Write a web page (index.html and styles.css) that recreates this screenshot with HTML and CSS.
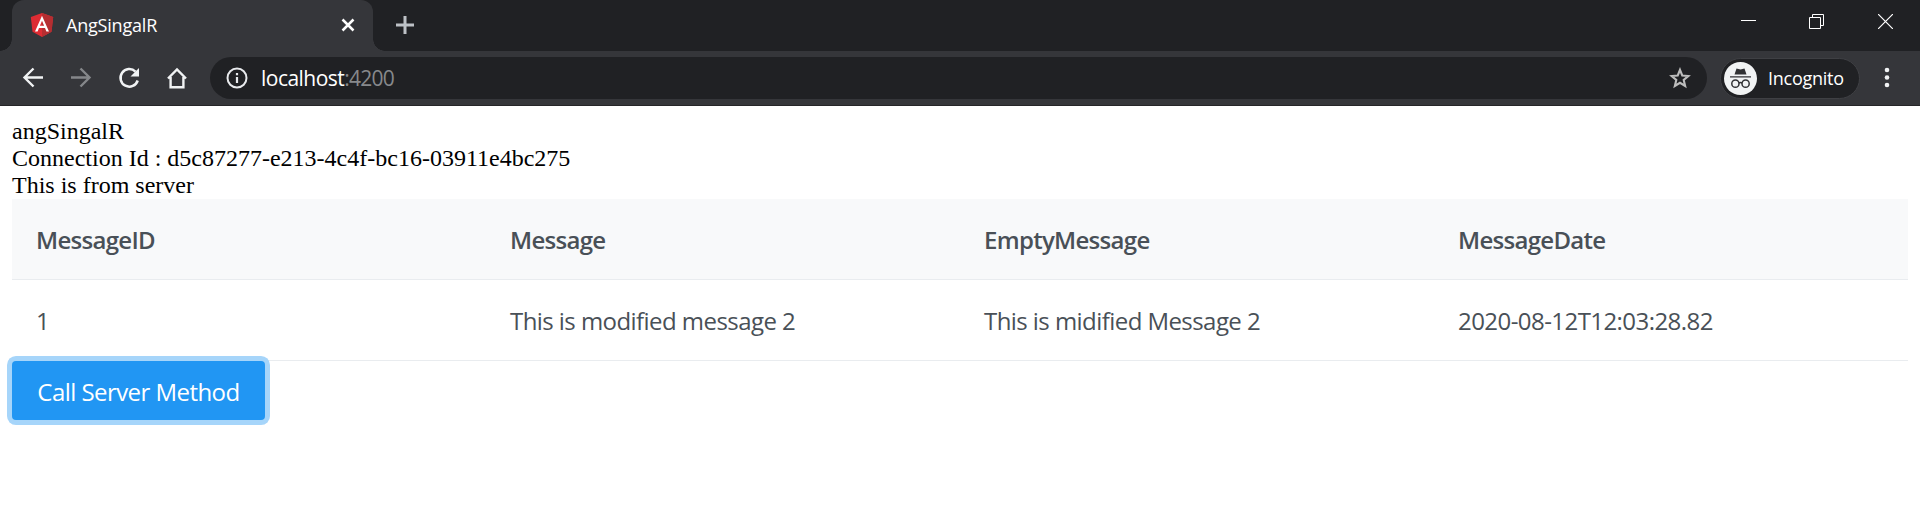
FILE: index.html
```html
<!DOCTYPE html>
<html lang="en">
<head>
<meta charset="utf-8">
<title>AngSingalR</title>
<link rel="stylesheet" href="styles.css">
</head>
<body>
<header class="browser">
  <div class="tabstrip">
    <div class="tab">
      <svg class="favicon" width="24" height="24" viewBox="0 0 24 24"><path fill="#dd2c33" d="M12 0 .8 4l1.700 14.800L12 24l9.500-5.200L23.200 4z"/><path fill="#b52e31" d="M12 0v24l9.500-5.200L23.200 4z"/><path fill="#fff" fill-rule="evenodd" d="M12 2.700 5 18.400h2.600L9 14.900h6l1.400 3.500H19zM12 7.700l2.100 5.100H9.900z"/></svg>
      <span class="tab-title">AngSingalR</span>
      <svg class="tab-close" width="14" height="14" viewBox="0 0 14 14"><path d="m1.500 1.500 11 11m0-11-11 11" stroke="#fff" stroke-width="2.500"/></svg>
    </div>
    <svg class="new-tab" width="18" height="18" viewBox="0 0 18 18"><path d="M9 0v18M0 9h18" stroke="#bdc1c6" stroke-width="3"/></svg>
    <div class="window-buttons">
      <svg width="15" height="15" viewBox="0 0 15 15"><path d="M0 6.500h15" stroke="#fff"/></svg>
      <svg width="15" height="15" viewBox="0 0 15 15" fill="none" stroke="#fff"><path d="M.5 3.500h11v11H.5zM3.500 3.500v-3h11v11h-3"/></svg>
      <svg class="close" width="15" height="15" viewBox="0 0 15 15"><path d="m0 0 15 15M15 0 0 15" stroke="#fff" stroke-width="1.200"/></svg>
    </div>
  </div>
  <div class="toolbar">
    <svg class="nav" width="24" height="24" viewBox="0 0 24 24" fill="none" stroke="#f1f3f4" stroke-width="2.400"><path d="M22 11.500H3.500m9-9-9 9 9 9"/></svg>
    <svg class="nav" width="24" height="24" viewBox="0 0 24 24" fill="none" stroke="#85878a" stroke-width="2.400"><path d="M2 11.500h18.500m-9-9 9 9-9 9"/></svg>
    <svg class="nav" width="24" height="24" viewBox="0 0 24 24"><path d="M20.700 14.500A8.800 8.800 0 1 1 18.500 5.600" fill="none" stroke="#f1f3f4" stroke-width="2.500"/><path d="M22 2v8.500h-8.500z" fill="#f1f3f4"/></svg>
    <svg class="nav" width="24" height="24" viewBox="0 0 24 24" fill="none" stroke="#f1f3f4" stroke-width="2.400"><path d="M3 12.500 12 3.500l9 9M5.600 11v10.300h12.800V11"/></svg>
    <div class="address">
      <svg width="22" height="22" viewBox="0 0 22 22"><circle cx="11" cy="11" r="9.500" fill="none" stroke="#e8eaed" stroke-width="2"/><path d="M11 10v6M11 6v2.200" stroke="#e8eaed" stroke-width="2.200"/></svg>
      <span class="url">localhost<span class="port">:4200</span></span>
      <svg class="star" width="22" height="22" viewBox="0 0 22 22"><path d="m11 2.800 2.250 5.700 6.100.5-4.650 4 1.450 6L11 15.800 5.850 19l1.450-6-4.650-4 6.100-.5z" fill="none" stroke="#bdbdbd" stroke-width="2.100"/></svg>
    </div>
    <div class="incognito">
      <svg width="33" height="33" viewBox="0 0 33 33"><circle cx="16.500" cy="16.500" r="16.500" fill="#f1f3f4"/><path d="M6 14.200h21v1.300H6zM10.500 12.500l2-6 4 1 4-1 2 6z" fill="#303134"/><g fill="none" stroke="#303134" stroke-width="1.500"><circle cx="11.400" cy="21.700" r="3.600"/><circle cx="21.600" cy="21.700" r="3.600"/><path d="M14.800 21q1.700-1 3.400 0"/></g></svg>
      <span class="profile">Incognito</span>
    </div>
    <svg class="menu" width="6" height="22" viewBox="0 0 6 22" fill="#f1f3f4"><circle cx="3" cy="3" r="2.300"/><circle cx="3" cy="10.500" r="2.300"/><circle cx="3" cy="18" r="2.300"/></svg>
  </div>
</header>
<main class="page">
  <div class="line">angSingalR</div>
  <div class="line">Connection Id : d5c87277-e213-4c4f-bc16-03911e4bc275</div>
  <div class="line">This is from server</div>
  <table class="messages">
    <thead><tr><th>MessageID</th><th>Message</th><th>EmptyMessage</th><th>MessageDate</th></tr></thead>
    <tbody><tr><td>1</td><td>This is modified message 2</td><td>This is midified Message 2</td><td>2020-08-12T12:03:28.82</td></tr></tbody>
  </table>
  <button class="call" type="button">Call Server Method</button>
</main>
</body>
</html>
```
FILE: styles.css
```css
* { box-sizing: border-box; }
body { margin: 0; background: #fff; overflow: hidden; font-family: "Open Sans", "Noto Sans", sans-serif; }
svg { display: block; flex: none; }
.browser { height: 106px; background: #35363a; border-bottom: 1px solid #252528; }
.tabstrip { display: flex; height: 51px; background: #202124; padding-left: 12px; }
.tab { position: relative; display: flex; align-items: center; width: 361px; height: 51px; padding: 0 18px 2px; background: #35363a; border-radius: 12px 12px 0 0; }
.tab::before, .tab::after { content: ""; position: absolute; bottom: 0; width: 12px; height: 12px; }
.tab::before { left: -12px; background: radial-gradient(circle at 0 0, #202124 11.500px, #35363a 12px); }
.tab::after { right: -12px; background: radial-gradient(circle at 100% 0, #202124 11.500px, #35363a 12px); }
.tab-title { margin-left: 12px; color: #fff; font-size: 18px; letter-spacing: -.2px; white-space: nowrap; }
.tab-close { margin-left: auto; }
.new-tab { margin: 16px 0 0 23px; }
.window-buttons { display: flex; gap: 53px; margin: 14px 27px 0 auto; }
.close { margin-left: 1px; }
.toolbar { display: flex; align-items: center; height: 54px; padding: 0 30px 0 21px; }
.nav { margin-right: 24px; }
.address { display: flex; align-items: center; width: 1497px; height: 42px; margin-left: -3px; padding: 0 16px; border-radius: 21px; background: #202124; }
.url { margin-left: 13px; color: #fff; font-size: 21px; line-height: 28px; letter-spacing: -.52px; }
.port { color: #87898c; letter-spacing: -.75px; }
.star { margin-left: auto; }
.incognito { display: flex; align-items: center; width: 140px; height: 41px; margin-left: 13px; padding-left: 3px; border: 1px solid #3f4044; border-radius: 21px; background: #202124; }
.profile { margin-left: 11px; color: #fff; font-size: 18px; letter-spacing: -.25px; white-space: nowrap; }
.menu { margin-left: auto; }
.page { padding: 12px; }
.line { font-family: "Liberation Serif", serif; font-size: 24px; line-height: 27px; color: #000; }
.messages { width: 1896px; table-layout: fixed; border-collapse: separate; border-spacing: 0; color: #495057; font-size: 24px; letter-spacing: -.56px; }
.messages th, .messages td { height: 81px; padding: 1px 24px 0; border-bottom: 1px solid #e9ecef; text-align: left; white-space: nowrap; }
.messages th { background: #f8f9fa; font-weight: 600; letter-spacing: -.7px; }
.call { display: block; width: 253px; height: 59px; padding: 2px 0 0; border: 0; border-radius: 4px; background: #2196f3; box-shadow: 0 0 0 5px #a6d5fa; color: #fff; font: 24px "Open Sans", "Noto Sans", sans-serif; letter-spacing: -.55px; white-space: nowrap; }
```
